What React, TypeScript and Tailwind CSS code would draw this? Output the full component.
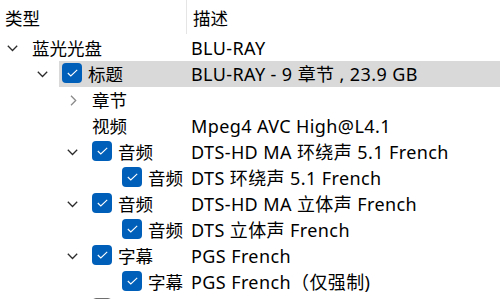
import React from "react";

type Row = {
  level: number;
  chevron?: "down" | "right";
  check?: "on" | "off";
  label: string;
  desc: string;
  selected?: boolean;
};

const rows: Row[] = [
  { level: 1, chevron: "down", label: "蓝光光盘", desc: "BLU-RAY" },
  { level: 2, chevron: "down", check: "on", label: "标题", desc: "BLU-RAY - 9 章节 , 23.9 GB", selected: true },
  { level: 3, chevron: "right", label: "章节", desc: "" },
  { level: 3, label: "视频", desc: "Mpeg4 AVC High@L4.1" },
  { level: 3, chevron: "down", check: "on", label: "音频", desc: "DTS-HD MA 环绕声 5.1 French" },
  { level: 4, check: "on", label: "音频", desc: "DTS 环绕声 5.1 French" },
  { level: 3, chevron: "down", check: "on", label: "音频", desc: "DTS-HD MA 立体声 French" },
  { level: 4, check: "on", label: "音频", desc: "DTS 立体声 French" },
  { level: 3, chevron: "down", check: "on", label: "字幕", desc: "PGS French" },
  { level: 4, check: "on", label: "字幕", desc: "PGS French（仅强制)" },
  { level: 3, check: "off", label: "", desc: "" },
];

const indents: Record<number, string> = {
  1: "w-[0px]",
  2: "w-[30px]",
  3: "w-[60px]",
  4: "w-[90px]",
};

function Chevron({ dir }: { dir?: "down" | "right" }) {
  return (
    <div className="w-[32px] h-full flex items-center pl-[7px] shrink-0">
      {dir === "down" && (
        <svg width="11" height="7" viewBox="0 0 11 7" fill="none">
          <path d="M0.8 0.8 L5.5 5.5 L10.2 0.8" stroke="#2b2b2b" strokeWidth="1.3" />
        </svg>
      )}
      {dir === "right" && (
        <svg width="11" height="11" viewBox="0 0 11 11" fill="none" className="ml-[1px]">
          <path d="M3 0.8 L7.7 5.5 L3 10.2" stroke="#8a8a8a" strokeWidth="1.3" />
        </svg>
      )}
    </div>
  );
}

function Check({ state }: { state: "on" | "off" }) {
  if (state === "off") {
    return <div className="w-[20px] h-[20px] rounded-[4px] border border-[#6f6f6f] bg-white shrink-0 mr-[6px]" />;
  }
  return (
    <div className="w-[20px] h-[20px] rounded-[4px] bg-[#005fb8] shrink-0 mr-[6px] flex items-center justify-center -mt-[2px]">
      <svg width="11" height="8" viewBox="0 0 11 8" fill="none">
        <path d="M0.8 4 L3.8 7 L10.2 0.8" stroke="#fff" strokeWidth="1.1" />
      </svg>
    </div>
  );
}

export default function App() {
  return (
    <div
      className="w-[500px] h-[299px] bg-white overflow-hidden text-[17.5px] text-black"
      style={{ fontFamily: '"Noto Sans", "Noto Sans CJK SC", sans-serif' }}
    >
      <div className="flex h-[35px] items-start">
        <div className="w-[186px] pl-[5px] pt-[5px] leading-[26px]">类型</div>
        <div className="w-px h-[34px] bg-[#e5e5e5]" />
        <div className="pl-[6px] pt-[5px] leading-[26px]">描述</div>
      </div>
      {rows.map((r, i) => (
        <div key={i} className="flex h-[26px] items-center leading-[26px] whitespace-nowrap">
          <div className="w-[187px] h-full flex items-center shrink-0">
            <div className={`${indents[r.level]} shrink-0`} />
            {r.level < 4 ? <Chevron dir={r.chevron} /> : <div className="w-[32px] shrink-0" />}
            <div className={`flex items-center h-full flex-1 ${r.selected ? "bg-[#d9d9d9] -ml-[3px] pl-[3px]" : ""}`}>
              {r.check && <Check state={r.check} />}
              <span>{r.label}</span>
            </div>
          </div>
          <div className={`h-full flex-1 pl-[4px] text-[18px] tracking-[0.4px] ${r.selected ? "bg-[#d9d9d9]" : ""}`}>{r.desc}</div>
        </div>
      ))}
    </div>
  );
}
